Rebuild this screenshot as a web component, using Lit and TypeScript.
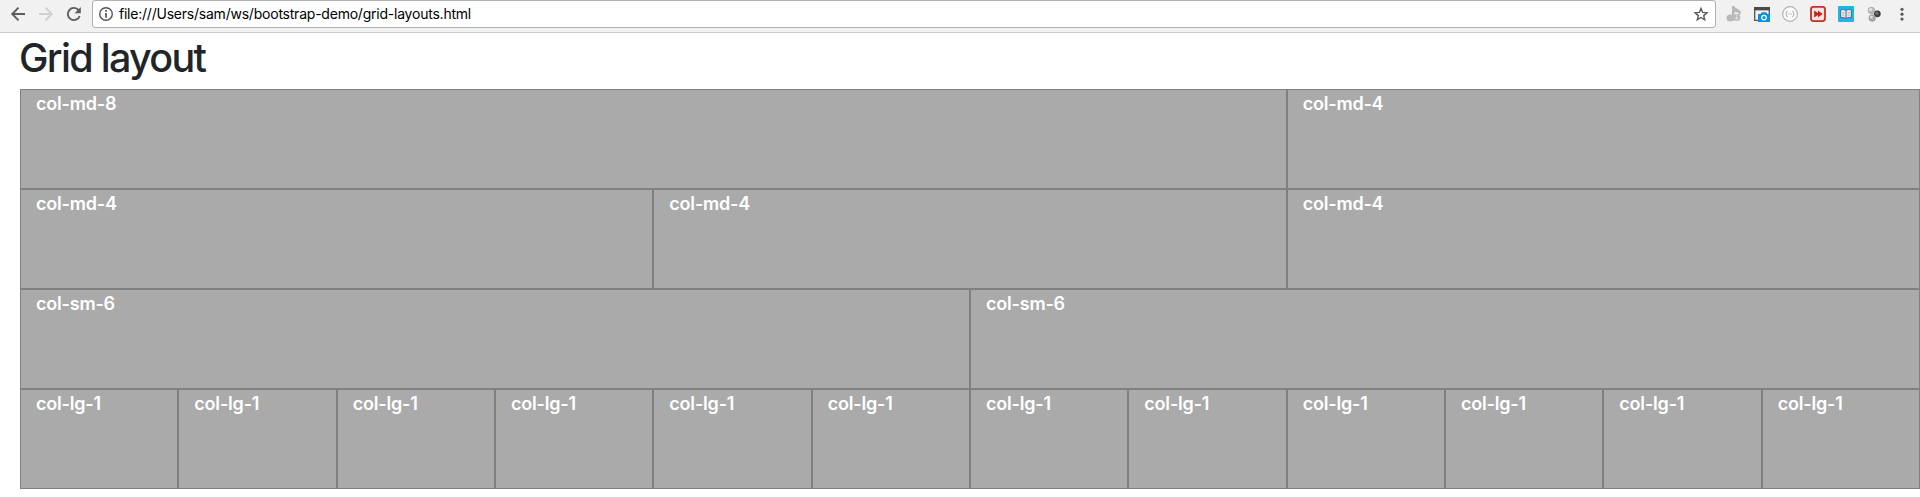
import { LitElement, html, css } from "lit";
import { customElement } from "lit/decorators.js";

const rows: { label: string; span: number }[][] = [
  [{ label: "col-md-8", span: 8 }, { label: "col-md-4", span: 4 }],
  Array.from({ length: 3 }, () => ({ label: "col-md-4", span: 4 })),
  Array.from({ length: 2 }, () => ({ label: "col-sm-6", span: 6 })),
  Array.from({ length: 12 }, () => ({ label: "col-lg-1", span: 1 })),
];

@customElement("browser-bar")
class BrowserBar extends LitElement {
  static styles = css`
    :host { display: block; }
    .bar { display: flex; height: 33px; box-sizing: border-box; background: #f1f1f1; border-bottom: 1px solid #cbcbcb; }
    .nav { display: flex; width: 92px; height: 28px; flex: none; }
    .address { display: flex; flex: 1; height: 28px; box-sizing: border-box; border: 1px solid #b1b1b1; border-radius: 3px; background: #fff; }
    .url { flex: 1; padding-left: 1px; font: 14px/26px Inter, sans-serif; letter-spacing: -0.225px; color: #000; white-space: nowrap; }
    .tools { width: 204px; height: 28px; flex: none; }
    svg { display: block; flex: none; }
  `;
  render() {
    return html`<div class="bar">
      <div class="nav">
        <svg width="92" height="28" viewBox="0 0 92 28" fill="none" stroke-width="1.9">
          <path d="M25 14H12.5M18.5 7.6L12.2 14l6.3 6.4" stroke="#5c5c5c"/>
          <path d="M39 14h12.5M45.5 7.6l6.3 6.4-6.3 6.4" stroke="#d0d0d0"/>
          <path d="M78.7 10.2A6.1 6.1 0 1 0 79.7 16" stroke="#5c5c5c"/>
          <path d="M80.8 7v6.2h-6.2z" fill="#5c5c5c"/>
        </svg>
      </div>
      <div class="address">
        <svg width="25" height="26" viewBox="93 1 25 26" fill="none">
          <circle cx="106" cy="14" r="6.3" stroke="#555" stroke-width="1.4"/>
          <path d="M106 13v4.7M106 10v1.7" stroke="#555" stroke-width="1.7"/>
        </svg>
        <span class="url">file:///Users/sam/ws/bootstrap-demo/grid-layouts.html</span>
        <svg width="26" height="26" viewBox="1689 1 26 26">
          <path d="M1701 8.4l1.7 4 4.3.4-3.3 2.8 1 4.2-3.7-2.3-3.7 2.3 1-4.2-3.3-2.8 4.3-.4z" fill="none" stroke="#5a5a5a" stroke-width="1.4"/>
        </svg>
      </div>
      <div class="tools">
        <svg width="204" height="28" viewBox="1716 0 204 28">
          <g fill="#b9b9b9">
            <path d="M1732 6h2.3c.5 2.8 6.5 3 6.5 6.5 0 1.5-.8 2.5-1.4 3.2.1-2.6-2.1-3.4-4.8-3.9v5.8h-2.6z"/>
            <ellipse cx="1730.5" cy="18" rx="4" ry="3.6"/>
            <circle cx="1736.7" cy="17.5" r="3.6"/>
          </g>
          <path d="M1736.7 15v4.5m-2-1.9l2 2 2-2" fill="none" stroke="#eee" stroke-width=".8"/>
          <path d="M1754.7 7.7h14.6v12.6h-14.6z" fill="#f5f5f5" stroke="#555" stroke-width="1.3"/>
          <path d="M1754 7h16v3.4h-16z" fill="#4b4b4b"/>
          <path d="M1758 14h2.6l1-1.7h4.8l1 1.7h2.6v8h-12z" fill="#0792dd"/>
          <circle cx="1764" cy="17.6" r="2.3" fill="none" stroke="#fff" stroke-width="1.2"/>
          <circle cx="1790" cy="14" r="7.4" fill="#fafafa" stroke="#b0b0b0" stroke-width="1.1"/>
          <path d="M1787.7 11.2c-1.7 0-.7 2-1.9 2.8 1.2.8.2 2.8 1.9 2.8m4.6-5.6c1.7 0 .7 2 1.9 2.8-1.2.8-.2 2.8-1.9 2.8M1788.2 14h.8m.6 0h.8m.6 0h.8" fill="none" stroke="#999" stroke-width=".9"/>
          <rect x="1811" y="6.9" width="14" height="14.2" rx="2.5" fill="#f5e4e2" stroke="#c92e25" stroke-width="1.8"/>
          <path d="M1814.2 10.4l3.8 2.5v-2.5l4.6 3.6-4.6 3.6v-2.5l-3.8 2.5z" fill="#bd241b"/>
          <rect x="1838" y="6" width="16" height="16" rx="1" fill="#20b5e8"/>
          <path d="M1840.7 9.9c2-.6 3.8-.4 5.3.6 1.5-1 3.3-1.2 5.3-.6v7.9c-2-.5-3.8-.3-5.3.7-1.5-1-3.3-1.2-5.3-.7z" fill="#eee" stroke="#35596a" stroke-width=".8"/>
          <path d="M1846 10.6v7.7" stroke="#35596a" stroke-width=".9"/>
          <path d="M1842.2 12.2h2.4m-2.4 1.8h2.4m-2.4 1.8h2.4m2.8-3.6h2.4m-2.4 1.8h2.4m-2.4 1.8h2.4" stroke="#98a7ad" stroke-width=".7"/>
          <circle cx="1877.3" cy="13.8" r="3.4" fill="#3e3e3e"/>
          <circle cx="1876.8" cy="13.2" r="1.5" fill="#777"/>
          <circle cx="1871.4" cy="10.5" r="3.3" fill="#bbb" stroke="#999" stroke-width=".6"/>
          <circle cx="1872.2" cy="18.1" r="3.3" fill="#aaa" stroke="#888" stroke-width=".6"/>
          <circle cx="1870.5" cy="9.6" r="1.5" fill="#e6e6e6"/>
          <circle cx="1871.3" cy="17" r="1.5" fill="#ddd"/>
          <g fill="#5a5a5a"><circle cx="1902" cy="9.3" r="1.6"/><circle cx="1902" cy="14.2" r="1.6"/><circle cx="1902" cy="19.1" r="1.6"/></g>
        </svg>
      </div>
    </div>`;
  }
}

@customElement("app-root")
class AppRoot extends LitElement {
  static styles = css`
    :host { display: block; height: 497px; background: #fff; overflow: hidden; font-family: Inter, sans-serif; }
    .content { padding-left: 20px; }
    h1 { margin: 0 0 8px -1px; box-sizing: border-box; height: 48px; padding-top: 1px; font-size: 39.5px; line-height: 48px; font-weight: 500; letter-spacing: -1.7px; color: #212529; }
    .row { display: grid; grid-template-columns: repeat(12, minmax(0, 1fr)); }
    .cell { height: 100px; box-sizing: border-box; padding: 0 15px; border: 1px solid #808080; background: #aaa; color: #fff; font-size: 18px; line-height: 27px; font-weight: 600; letter-spacing: -0.2px; white-space: nowrap; }
    .span-1 { grid-column: span 1; }
    .span-4 { grid-column: span 4; }
    .span-6 { grid-column: span 6; }
    .span-8 { grid-column: span 8; }
  `;
  render() {
    return html`<browser-bar></browser-bar>
      <main class="content">
        <h1>Grid layout</h1>
        ${rows.map((row) => html`<div class="row">${row.map((c) => html`<div class="cell span-${c.span}">${c.label}</div>`)}</div>`)}
      </main>`;
  }
}
